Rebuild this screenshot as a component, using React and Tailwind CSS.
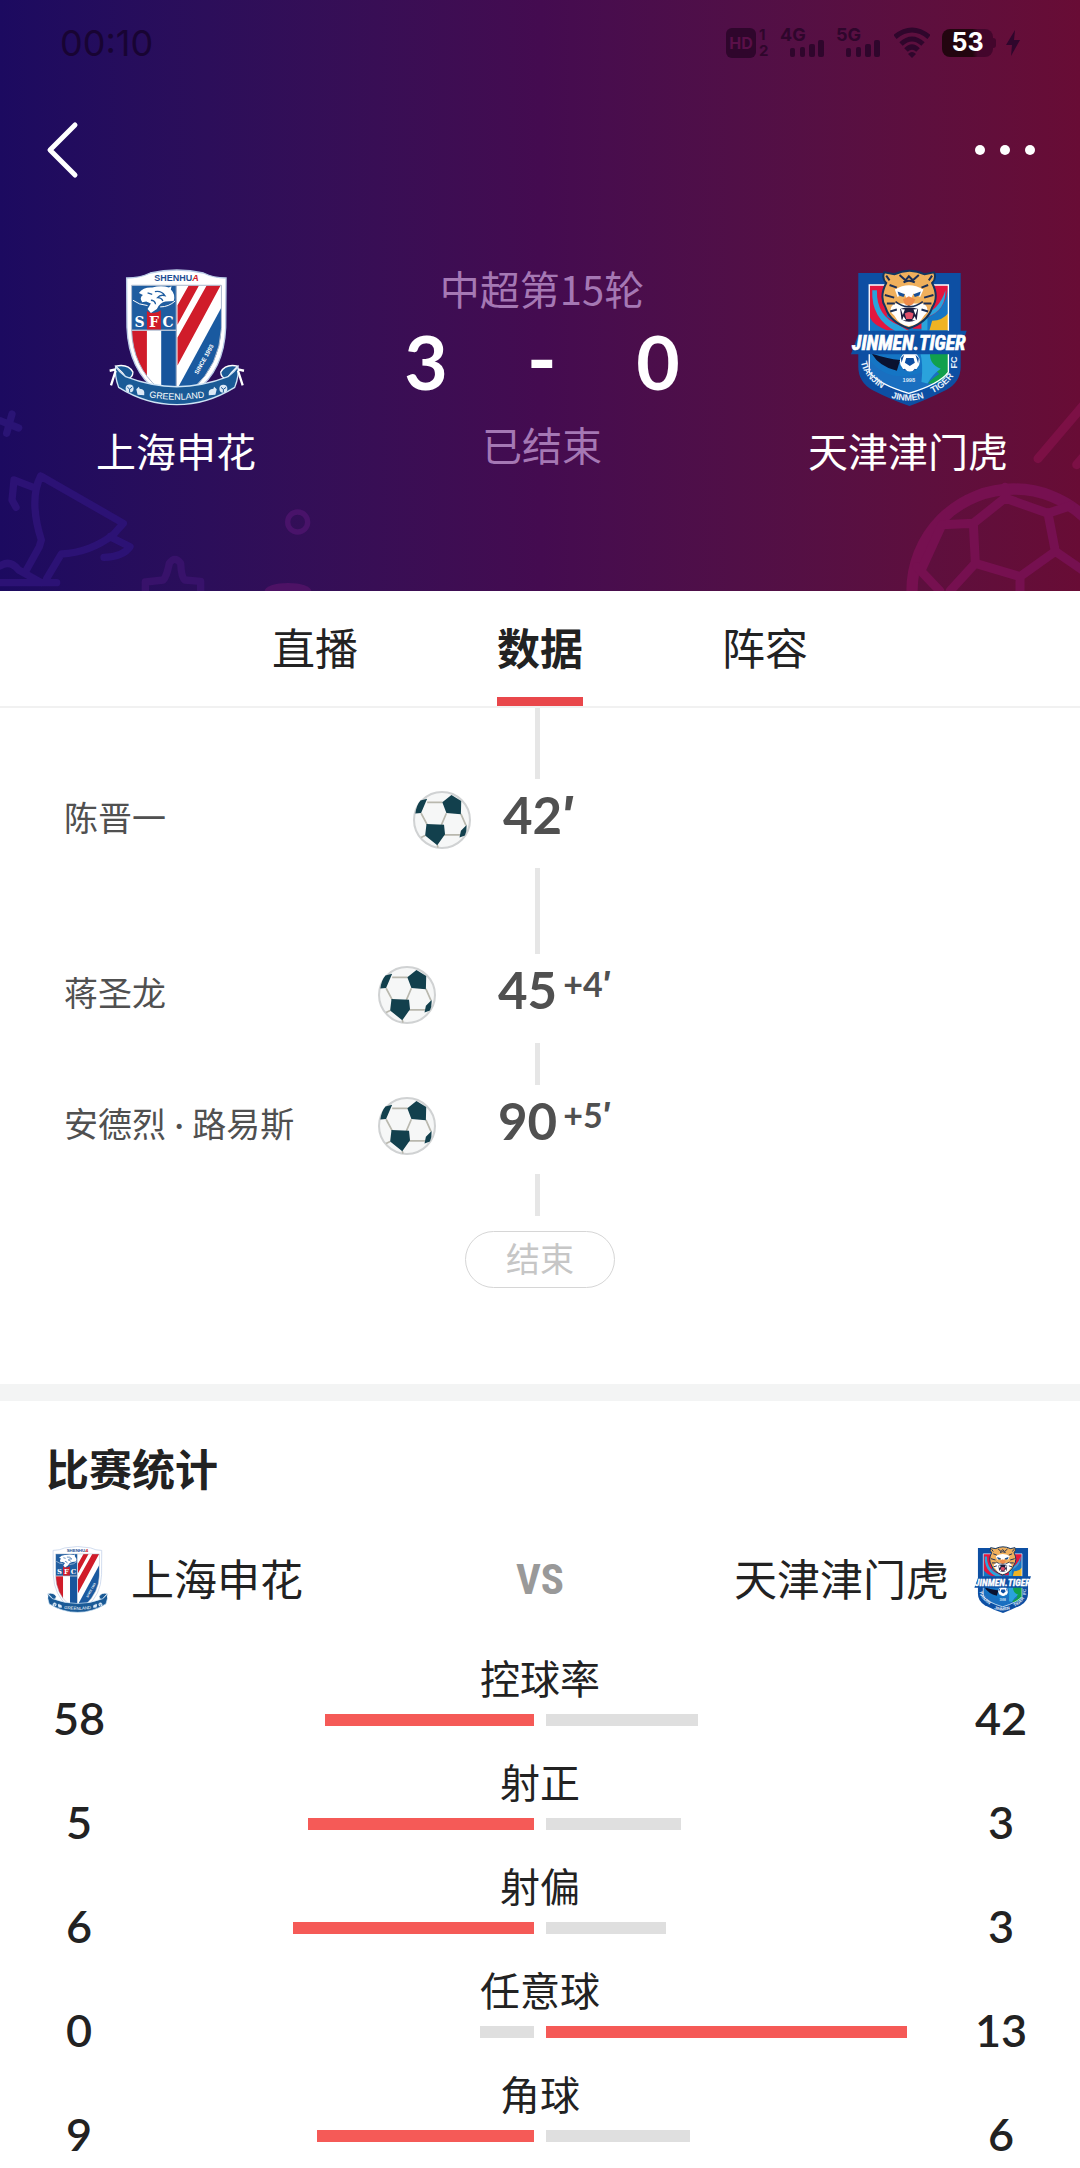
import React from 'react';

const events = [
  { name: '陈晋一', minute: '42', extra: '', line: 'h-[71px]' },
  { name: '蒋圣龙', minute: '45', extra: '+4', line: 'h-[86px]' },
  { name: '安德烈 · 路易斯', minute: '90', extra: '+5', line: 'h-[42px]' },
];

const stats = [
  { label: '控球率', home: 58, away: 42 },
  { label: '射正', home: 5, away: 3 },
  { label: '射偏', home: 6, away: 3 },
  { label: '任意球', home: 0, away: 13 },
  { label: '角球', home: 9, away: 6 },
];

const ShenhuaLogo = ({ className = '' }) => (
  <svg viewBox="143 56 412 412" className={className} role="img" aria-label="上海申花">
    <defs>
      <clipPath id="shenhua-shield">
        <path d="M214 105H484V235Q478 345 400 415H295Q218 350 214 240Z" />
      </clipPath>
      <path id="shenhua-ribbon" d="M240 436Q350 462 460 436" />
    </defs>
    <path
      d="M199 83Q240 83 270 68Q350 50 430 68Q460 83 498 83L497 232Q492 362 405 425H292Q205 360 200 232Z"
      fill="#fff"
      stroke="#b9cbe6"
      strokeWidth="4"
    />
    <g clipPath="url(#shenhua-shield)">
      <rect x="214" y="105" width="133" height="134" fill="#1f5da0" />
      <path d="M214 242H260V415H214Z" fill="#d01c2a" />
      <path d="M303 242H347V415H303Z" fill="#17559c" />
      <path d="M350 105H484V415H350Z" fill="#fff" />
      <path d="M386 105H417L352 224V165ZM440 105H482L352 346V262Z" fill="#d01c2a" />
      <path d="M484 172V415H352Z" fill="#1a5aa0" />
      <path d="M260 182Q280 196 302 180V239H260Z" fill="#d01c2a" />
    </g>
    <path d="M214 105H484V235Q478 345 400 415H295Q218 350 214 240ZM349 105V415M214 240H349" fill="none" stroke="#a9b6cc" strokeWidth="3" />
    <path
      d="M236 128Q250 110 276 112Q304 104 326 112L334 108L332 118Q346 132 341 152L316 154Q300 156 290 176L272 188L262 176L272 160L258 154L246 156Q236 142 248 134Z"
      fill="#fff"
    />
    <path d="M262 128L276 132M284 124Q304 120 314 136Q300 132 292 142Q304 142 308 152M272 150Q284 150 286 162M216 150Q236 166 262 168M345 150Q330 168 300 172" fill="none" stroke="#1f5da0" strokeWidth="4" />
    <path d="M218 150Q236 164 262 166M345 152Q326 170 300 170" fill="none" stroke="#fff" strokeWidth="3" />
    <g fill="#fff" fontFamily="'DejaVu Serif', serif" fontWeight="700" fontSize="42" textAnchor="middle">
      <text x="238" y="229">S</text>
      <text x="281" y="229">F</text>
      <text x="324" y="229">C</text>
    </g>
    <text x="349" y="92" textAnchor="middle" fontFamily="'Liberation Sans', sans-serif" fontWeight="700" fontSize="27" fill="#1f4f94">
      SHENHU<tspan fill="#d01c2a" fontStyle="italic">A</tspan>
    </text>
    <text transform="translate(413 374) rotate(-61)" fontFamily="'Liberation Sans', sans-serif" fontWeight="700" fontSize="18" fill="#fff">
      SINCE 1993
    </text>
    <path d="M166 348Q204 340 218 366Q218 384 200 386L186 368Z" fill="#1a5a96" stroke="#fff" strokeWidth="4" />
    <path d="M533 348Q496 340 482 366Q482 384 500 386L514 368Z" fill="#1a5a96" stroke="#fff" strokeWidth="4" />
    <path
      d="M166 350Q176 366 196 380Q350 440 504 380Q522 366 534 350Q538 376 524 412Q440 464 350 464Q258 464 175 412Q162 376 166 350Z"
      fill="#1a5a96"
      stroke="#cfe4f5"
      strokeWidth="4"
    />
    <path d="M166 358L148 362M166 362L152 406M534 358L552 362M534 362L548 406" fill="none" stroke="#fff" strokeWidth="7" />
    <g fill="#dbe9f6">
      <circle cx="208" cy="415" r="12" />
      <circle cx="490" cy="416" r="12" />
      <path d="M228 418L236 410L238 416Q256 416 252 436L232 434ZM470 418L462 410L460 416Q442 416 446 436L466 434Z" />
    </g>
    <path d="M201 411L208 417L216 411M208 417V426M483 412L490 418L498 412M490 418V427" fill="none" stroke="#1a5a96" strokeWidth="3" />
    <text fontFamily="'Liberation Sans', sans-serif" fontSize="27" fill="#fff" textAnchor="middle">
      <textPath href="#shenhua-ribbon" startOffset="50%">GREENLAND</textPath>
    </text>
  </svg>
);

const TigerLogo = ({ className = '' }) => (
  <svg viewBox="121 56 412 412" className={className} role="img" aria-label="天津津门虎">
    <defs>
      <clipPath id="tiger-shield">
        <path d="M209 104H447V372Q420 404 328 432Q236 404 209 372Z" />
      </clipPath>
      <path id="tiger-arc-left" d="M183 320Q182 380 260 424" />
      <path id="tiger-arc-bottom" d="M256 436Q328 468 392 436" />
      <path id="tiger-arc-right" d="M386 436Q446 412 470 364" />
      <path id="tiger-arc-top" d="M474 360V314" />
    </defs>
    <path d="M176 68H484V350Q484 396 440 420Q380 450 330 468Q276 450 218 420Q176 396 176 350Z" fill="#0d4fa3" />
    <g clipPath="url(#tiger-shield)">
      <path d="M209 104H447V432H209Z" fill="#1575c4" />
      <path d="M209 104H262V200Q300 220 330 240H262Q209 220 209 190Z" fill="#e2173f" />
      <path d="M232 120Q230 200 300 226L330 244H290Q214 206 218 120Z" fill="#2aa3dc" />
      <path d="M396 104H447Q440 190 372 204V236H340V196Q400 180 396 104Z" fill="#e2173f" />
      <path d="M438 120Q440 180 384 200V240H366V196Q420 180 438 120Z" fill="#2aa3dc" />
      <path d="M447 188V240H390L398 212Q430 210 447 188Z" fill="#f0b323" />
      <path d="M216 310Q262 326 302 330L292 362Q240 350 216 310Z" fill="#0a1230" />
      <path d="M209 330Q260 390 330 376Q400 366 447 310V432H209Z" fill="#1a6fc0" />
      <path d="M390 306H447V400H386Q392 390 420 372Q392 350 390 306Z" fill="#11a04c" />
      <path d="M362 306H392Q388 342 424 356Q400 372 384 400L366 396Q372 340 362 306Z" fill="#2aa3dc" />
    </g>
    <path d="M209 104H447V366Q420 402 328 430Q236 402 209 366Z" fill="none" stroke="#fff" strokeWidth="4" />
    <path d="M254 66L284 72Q330 50 376 72L404 66Q412 84 398 98Q420 140 398 172Q384 216 328 234Q272 216 258 172Q238 140 260 98Q246 84 254 66Z" fill="#f0b05c" stroke="#12345f" strokeWidth="6" />
    <path d="M284 160Q262 180 284 196Q300 226 328 228Q358 226 374 196Q394 180 374 160Z" fill="#fff" />
    <path d="M286 118Q328 92 372 118L362 140L342 130L332 150H324L314 130L294 140Z" fill="#fff" />
    <path d="M260 76L270 90M398 76L388 90M300 74L318 90L328 78L340 90L358 74M312 96Q328 86 346 96M270 104L292 112M386 104L366 112M256 134L284 142M402 134L374 142M262 160L286 160M396 160L372 160M272 184L292 178M386 184L366 178" fill="none" stroke="#1c2f55" strokeWidth="6" />
    <path d="M294 124L316 132L312 140L298 136ZM364 124L342 132L346 140L360 136Z" fill="#174f96" />
    <path d="M310 148L328 138L348 148L340 162L328 168L316 162Z" fill="#ee8b4a" />
    <path d="M288 154Q312 172 328 168Q346 172 370 154" fill="none" stroke="#1c2f55" strokeWidth="5" />
    <path d="M302 176Q328 168 356 176L352 208Q328 222 306 208Z" fill="#1b1c3e" />
    <path d="M316 190Q328 180 342 190L338 206H320Z" fill="#e2506a" />
    <path d="M304 176L310 194L316 178ZM354 176L348 194L342 178ZM308 210L312 198L320 210ZM350 210L346 198L338 210Z" fill="#fff" />
    <circle cx="331" cy="334" r="30" fill="#fff" />
    <path d="M320 324H342L346 338L331 348L316 338ZM304 324L314 314L306 338ZM358 324L348 314L356 340ZM316 356L324 364L310 358ZM346 356L338 364L352 358Z" fill="#0d4fa3" />
    <path d="M180 242H502L478 312H154Z" fill="#0d4fa3" />
    <text x="328" y="300" textAnchor="middle" fontFamily="'Roboto Condensed', 'Liberation Sans', sans-serif" fontWeight="700" fontStyle="italic" fontSize="59" fill="#fff" stroke="#fff" strokeWidth="2">
      JINMEN.TIGER
    </text>
    <text x="328" y="397" textAnchor="middle" fontFamily="'Liberation Sans', sans-serif" fontWeight="700" fontSize="17" fill="#d8e8f8">
      1998
    </text>
    <g fontFamily="'Liberation Sans', sans-serif" fontWeight="700" fontSize="27" fill="#e6f0fa" textAnchor="middle">
      <text><textPath href="#tiger-arc-left" startOffset="50%">TIANJIN</textPath></text>
      <text><textPath href="#tiger-arc-bottom" startOffset="50%">JINMEN</textPath></text>
      <text><textPath href="#tiger-arc-right" startOffset="50%">TIGER</textPath></text>
      <text><textPath href="#tiger-arc-top" startOffset="50%">FC</textPath></text>
    </g>
  </svg>
);

const BallIcon = ({ className = '' }) => (
  <svg viewBox="114 76 172 172" className={className} aria-hidden="true">
    <circle cx="200" cy="162" r="83" fill="#f6f7f7" stroke="#d0d2d3" strokeWidth="6" />
    <path d="M156 110H202M213 142L198 177M138 142L156 176M256 144L271 178M205 206H255M186 236L188 244M138 214L150 208" fill="none" stroke="#b9b8ae" strokeWidth="5" />
    <path d="M228 88L257 106L256 145L213 141L201 109ZM154 174L206 176L209 204L186 237L150 208ZM156 99L138 141L121 143Q124 118 136 104ZM273 177Q274 196 268 208L252 214L256 194Z" fill="#12404d" />
  </svg>
);

const HeaderArt = () => (
  <>
    <svg viewBox="0 0 1080 573" className="absolute bottom-0 left-0 w-[360px]" fill="none" strokeWidth="22" strokeLinecap="round" strokeLinejoin="round" aria-hidden="true">
      <path d="M0 62L56 84M36 42L20 100" stroke="#2a1475" />
      <path d="M48 322L36 300L42 240L100 262M122 228L370 370L340 404Q270 458 184 462L140 536M122 228Q86 300 124 420L118 440L74 520M330 410L390 440Q370 470 312 472M0 498Q30 478 56 510L124 548M0 548H170" stroke="#2c1275" />
      <path d="M436 573V546L490 540Q500 530 508 490Q524 466 542 490Q544 530 554 540L602 544V573" stroke="#38126b" />
      <circle cx="893" cy="366" r="30" stroke="#49136a" strokeWidth="16" />
      <ellipse cx="864" cy="573" rx="70" ry="24" fill="#4d1265" />
    </svg>
    <svg viewBox="0 0 960 573" className="absolute right-0 bottom-0 w-[320px]" fill="none" stroke="#761050" strokeWidth="27" strokeLinecap="round" aria-hidden="true">
      <path d="M834 176L980 4M950 194L980 160" stroke="#7c1045" />
      <circle cx="762" cy="573" r="306" strokeWidth="34" />
      <path d="M735 262V294L640 370L546 374M640 370L646 490L780 530L886 454L864 340L735 294M864 340L930 318M886 454L970 512M780 530V573M646 490L570 573M470 500L540 573M546 374L484 510" />
    </svg>
  </>
);

const Signal = ({ label }) => (
  <div className="relative h-8 w-[46px]">
    <span className="absolute top-0 left-0 font-[Inter] text-[18px] leading-4 font-bold">{label}</span>
    <svg viewBox="0 0 46 32" className="h-8 w-[46px]" fill="currentColor" aria-hidden="true">
      <rect x="10" y="21" width="5" height="9" rx="2" />
      <rect x="20" y="20" width="5" height="10" rx="2" />
      <rect x="29" y="17" width="6" height="13" rx="2" />
      <rect x="38" y="13" width="6" height="17" rx="2" />
    </svg>
  </div>
);

const StatusBar = () => (
  <div className="flex h-[86px] items-center justify-between px-[60px] text-[#2f062c]">
    <span className="font-[Inter] text-[36px] text-[#180433]">00:10</span>
    <div className="flex items-center">
      <div className="mr-2.5 flex w-11 items-center gap-[3px] font-[Inter] font-bold">
        <span className="flex h-[30px] w-[30px] items-center justify-center rounded-md bg-[#2f062c] text-[16px] leading-5 text-[#5a0f48]">HD</span>
        <span className="flex flex-col text-[15px] leading-4">
          <span>1</span>
          <span>2</span>
        </span>
      </div>
      <div className="mr-3 flex gap-2.5">
        <Signal label="4G" />
        <Signal label="5G" />
      </div>
      <svg viewBox="0 0 36 32" className="mr-3 h-8 w-9" fill="none" stroke="currentColor" strokeWidth="5" aria-hidden="true">
        <path d="M1 10Q18 -4 35 10M7 17Q18 7 29 17M12 23Q18 17 24 23" />
        <path d="M14 27Q18 23 22 27L18 31Z" fill="currentColor" stroke="none" />
      </svg>
      <div className="mr-2.5 flex items-center">
        <span className="flex h-7 w-[51px] items-center justify-center rounded-lg bg-linear-to-r from-[#22050f] from-60% to-[#43062c] to-70% font-[Inter] text-[25px] font-bold text-white">53</span>
        <span className="h-2.5 w-[3px] rounded-r bg-[#43062c]" />
      </div>
      <svg viewBox="0 0 14 26" className="h-[26px] w-3.5" fill="currentColor" aria-hidden="true">
        <path d="M9 0L0 15H6L5 26L14 10H8Z" />
      </svg>
    </div>
  </div>
);

const Team = ({ name, logo: Logo }) => (
  <div className="flex w-[200px] flex-col items-center pt-[55px]">
    <Logo className="size-[137px]" />
    <span className="mt-3.5 text-[40px] leading-[60px] whitespace-nowrap text-white">{name}</span>
  </div>
);

const MatchHeader = () => (
  <header className="relative overflow-hidden bg-linear-to-r from-[#1c0a60] via-[#440b50] to-[#680c35]">
    <HeaderArt />
    <div className="relative">
      <StatusBar />
      <div className="flex h-32 items-center justify-between px-[45px] text-white">
        <button type="button" aria-label="返回">
          <svg viewBox="0 0 36 60" className="h-[60px] w-9" fill="none" stroke="currentColor" strokeWidth="5" strokeLinecap="round" strokeLinejoin="round">
            <path d="M30 5L5 30L30 55" />
          </svg>
        </button>
        <button type="button" aria-label="更多" className="flex gap-[15px]">
          <span className="size-2.5 rounded-full bg-white" />
          <span className="size-2.5 rounded-full bg-white" />
          <span className="size-2.5 rounded-full bg-white" />
        </button>
      </div>
      <div className="flex justify-between pr-[72px] pb-[111px] pl-[76px]">
        <Team name="上海申花" logo={ShenhuaLogo} />
        <div className="flex w-[348px] flex-col pt-[46px] text-center text-[40px] leading-[56px] text-[#a578b4]">
          <span>中超第15轮</span>
          <div className="mb-2.5 grid grid-cols-3 font-[Lato] text-[75px] leading-[90px] font-bold text-white">
            <span>3</span>
            <span className="font-[Roboto]">-</span>
            <span>0</span>
          </div>
          <span>已结束</span>
        </div>
        <Team name="天津津门虎" logo={TigerLogo} />
      </div>
    </div>
  </header>
);

const Tab = ({ children, active = false }) => (
  <button
    type="button"
    aria-current={active ? 'page' : undefined}
    className={`h-[115px] border-y-9 border-t-transparent pb-1 text-[43px] ${active ? 'border-b-[#e9474b] font-bold' : 'border-b-transparent'}`}
  >
    {children}
  </button>
);

const TimelineLine = ({ className = '' }) => (
  <div className="flex justify-center pr-1.5">
    <span className={`w-[5px] bg-[#e6e6e6] ${className}`} />
  </div>
);

const EventRow = ({ name, minute, extra }) => (
  <div className="flex h-[89px] items-center pb-2 text-[#505050]">
    <div className="flex flex-1 items-center justify-between">
      <span className="pb-1 pl-16 font-[Lato,'Noto_Sans_CJK_SC',sans-serif] text-[34px]">{name}</span>
      <BallIcon className="size-[58px]" />
    </div>
    <div className={`flex items-start pb-2.5 font-[Lato] text-[51px] leading-[60px] font-bold ${extra ? 'w-[208px] pl-[62px]' : 'w-[138px] pl-8'}`}>
      <span>{minute}</span>
      {extra && <span className="pl-1.5 text-[34px] leading-[48px]">{extra}</span>}
      <span className={`font-[Inter] ${extra ? 'text-[34px] leading-[48px]' : ''}`}>′</span>
    </div>
    <div className="flex-1" />
  </div>
);

const StatRow = ({ label, home, away }) => {
  const total = home + away;
  const homeWins = home > away;
  return (
    <div className="flex h-[84px]">
      <span className="w-[158px] pt-9 text-center font-[Lato] text-[45px] leading-[46px] font-semibold">{home}</span>
      <div className="flex-1 px-[15px]">
        <div className="text-center text-[40px] leading-9">{label}</div>
        <div className="mt-[19px] grid grid-cols-2 gap-3">
          <div className="flex justify-end">
            <span
              className={`h-3 min-w-[54px] ${homeWins ? 'bg-[#f55a57]' : 'bg-[#dfdfdf]'}`}
              style={{ width: `${(home / total) * 100}%` }}
            />
          </div>
          <div className="flex">
            <span
              className={`h-3 min-w-[54px] ${homeWins ? 'bg-[#dfdfdf]' : 'bg-[#f55a57]'}`}
              style={{ width: `${(away / total) * 100}%` }}
            />
          </div>
        </div>
      </div>
      <span className="w-[158px] pt-9 text-center font-[Lato] text-[45px] leading-[46px] font-semibold">{away}</span>
    </div>
  );
};

export default function App() {
  return (
    <div className="bg-white font-['Noto_Sans_CJK_SC',sans-serif] text-[#222222]">
      <MatchHeader />
      <nav className="flex justify-center gap-[139px] border-b-2 border-[#f1f1f1]">
        <Tab>直播</Tab>
        <Tab active>数据</Tab>
        <Tab>阵容</Tab>
      </nav>

      <section className="pb-24">
        {events.map((event) => (
          <React.Fragment key={event.name}>
            <TimelineLine className={event.line} />
            <EventRow {...event} />
          </React.Fragment>
        ))}
        <TimelineLine className="h-[42px]" />
        <div className="mx-auto mt-[15px] flex h-[57px] w-[150px] items-center justify-center rounded-full border border-[#d6d6d6] pb-1 text-[34px] text-[#c6c6c6]">
          结束
        </div>
      </section>

      <section className="border-t-17 border-[#f3f4f4] pt-[38px] pb-2">
        <h2 className="pl-[46px] text-[43px] leading-[56px] font-bold">比赛统计</h2>
        <div className="mt-[50px] flex h-[68px] items-center px-11 text-[43px]">
          <div className="flex flex-1 items-center gap-5">
            <ShenhuaLogo className="size-[67px]" />
            <span className="pb-1">上海申花</span>
          </div>
          <span className="font-['Roboto_Condensed',Roboto,sans-serif] text-[43px] font-bold text-[#999999]">VS</span>
          <div className="flex flex-1 items-center justify-end gap-5">
            <span className="pb-1">天津津门虎</span>
            <TigerLogo className="size-[67px]" />
          </div>
        </div>
        <div className="mt-[46px] flex flex-col gap-5">
          {stats.map((stat) => (
            <StatRow key={stat.label} {...stat} />
          ))}
        </div>
      </section>
    </div>
  );
}
